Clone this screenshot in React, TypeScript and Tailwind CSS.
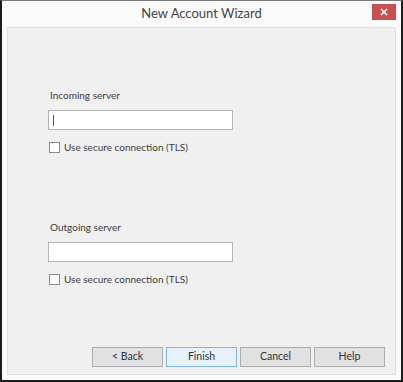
import React from "react";

const FONT = { fontFamily: 'Lato, "Open Sans", "Liberation Sans", sans-serif' };

function ServerBlock({ label, caret }: { label: string; caret?: boolean }) {
  return (
    <div className="flex flex-col">
      <div className="text-[10px] leading-[16px] text-[#3c3c3c]">{label}</div>
      <div className="mt-[7px] ml-[-2px] flex h-[20px] w-[185px] items-center border border-[#b4b4b4] bg-white pl-[4px]">
        {caret && <div className="h-[11px] w-px bg-[#555]" />}
      </div>
      <div className="mt-[10px] ml-[-1px] flex items-center gap-[4px]">
        <div className="h-[11px] w-[11px] border border-[#8a8a8a] bg-white" />
        <span className="text-[10px] leading-[14px] text-[#3c3c3c]">Use secure connection (TLS)</span>
      </div>
    </div>
  );
}

function Btn({ label, primary }: { label: string; primary?: boolean }) {
  return (
    <div
      className={`flex h-[20px] w-[71px] items-center justify-center border text-[10.5px] text-[#333] ${
        primary ? "border-[#7eb4ea] bg-[#e5f1fb]" : "border-[#adadad] bg-[#e1e1e1]"
      }`}
    >
      {label}
    </div>
  );
}

export default function App() {
  return (
    <div
      className="flex h-[382px] w-[403px] flex-col border-x-2 border-b-2 border-t border-x-[#1c1c1c] border-b-[#1c1c1c] border-t-[#7a7a7a] bg-[#fbfbfb]"
      style={FONT}
    >
      {/* Title bar */}
      <div className="relative flex h-[26px] items-center justify-center">
        <span className="text-[13px] text-[#444]">New Account Wizard</span>
        <div className="absolute right-[5px] top-[3px] flex h-[16px] w-[24px] items-center justify-center bg-[#c75050]">
          <svg width="8" height="8" viewBox="0 0 8 8">
            <path d="M1 1L7 7M7 1L1 7" stroke="#fff" strokeWidth="1.6" />
          </svg>
        </div>
      </div>

      {/* Content panel */}
      <div className="mx-[5px] mb-[5px] flex flex-1 flex-col border border-[#dfdfdf] bg-[#f0f0f0] pl-[42px] pr-[10px]">
        <div className="mt-[59px]">
          <ServerBlock label="Incoming server" caret />
        </div>
        <div className="mt-[65px]">
          <ServerBlock label="Outgoing server" />
        </div>
        <div className="mt-auto mb-[7px] flex justify-end gap-[3px]">
          <Btn label="< Back" />
          <Btn label="Finish" primary />
          <Btn label="Cancel" />
          <Btn label="Help" />
        </div>
      </div>
    </div>
  );
}
